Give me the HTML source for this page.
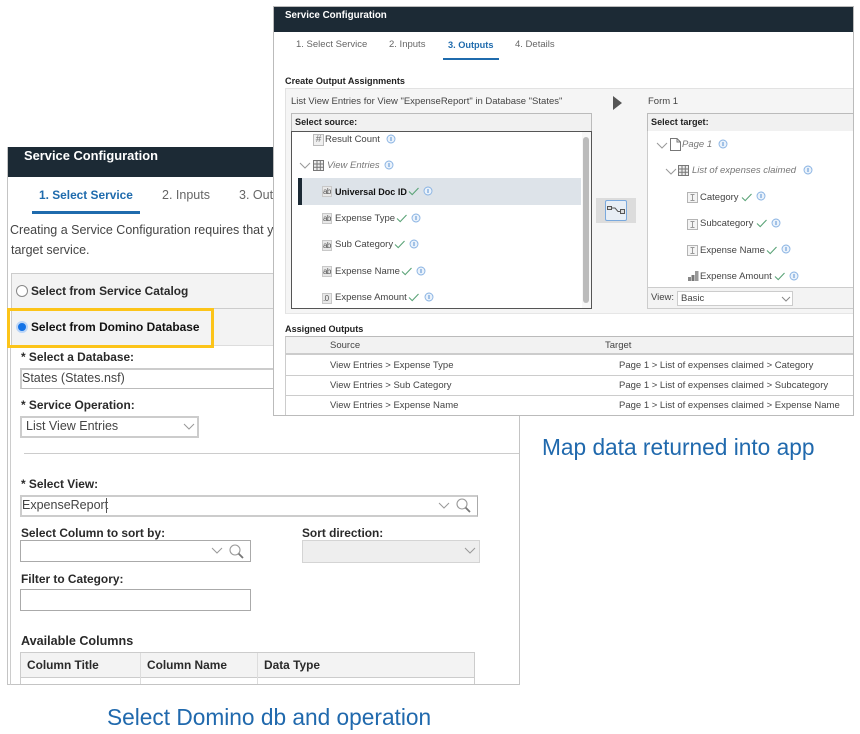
<!DOCTYPE html>
<html><head><meta charset="utf-8">
<style>
html,body{margin:0;padding:0;background:#fff;width:860px;height:734px;overflow:hidden}
body{position:relative;font-family:"Liberation Sans",sans-serif;color:#333}
.a{position:absolute;box-sizing:border-box}
.t{position:absolute;white-space:nowrap;line-height:16px;height:16px;font-size:12.5px;color:#333;margin-top:1px}
.b{font-weight:bold;color:#2a2a2a;font-size:11.9px}
.s{font-size:9.5px;color:#444}
.sb{font-size:9.1px;font-weight:bold;color:#222}
.i{font-style:italic;color:#777}
svg{position:absolute;overflow:visible}
.ab{position:absolute;width:10px;height:11px;background:#e8e8e8;border:1px solid #c8c8c8;box-sizing:border-box;font-size:8px;letter-spacing:-.6px;line-height:9px;text-align:left;color:#555;overflow:hidden}
.cap{position:absolute;white-space:nowrap;font-size:22.7px;line-height:26px;color:#2069ad;margin-top:1px}
</style></head><body>
<svg width="0" height="0" style="position:absolute"><defs>
<g id="info"><circle cx="4" cy="4" r="4" fill="#eaf2fb" stroke="#86b1e2" stroke-width=".9"/><path d="M4 2v4" stroke="#5b93d3" stroke-width="1"/></g>
<path id="chk" d="M0 4.5L3.2 7.6L9.5 1" fill="none" stroke="#5aa377" stroke-width="1.1"/>
<path id="chev" d="M0 0L5 5L10 0" fill="none" stroke="#999" stroke-width="1"/>
<g id="mag"><circle cx="6" cy="6" r="5" fill="none" stroke="#999" stroke-width="1.1"/><path d="M9.6 9.6L14 14" stroke="#777" stroke-width="1.8"/></g>
<g id="grid" fill="none" stroke="#777" stroke-width="1"><rect x=".5" y=".5" width="10" height="10" fill="#eee"/><path d="M.5 4h10M.5 7.3h10M4 .5v10M7.3 .5v10"/></g>
<g id="ti" fill="none"><rect x=".5" y=".5" width="10" height="10" fill="#f4f4f4" stroke="#b4b4b4"/><path d="M3.5 2.5h4M3.5 8.5h4M5.5 2.5v6" stroke="#999"/></g>
</defs></svg>

<!-- LEFT PANEL -->
<div class="a" style="left:7px;top:147px;width:513px;height:538px;border:1px solid #c4c4c4;background:#fff"></div>
<div class="a" style="left:8px;top:147px;width:511px;height:30px;background:#1c2a35"></div>
<div class="t" style="left:24px;top:147px;font-weight:bold;color:#fff;font-size:12.9px">Service Configuration</div>
<div class="t b" style="left:39px;top:186px;color:#1f6bad">1. Select Service</div>
<div class="a" style="left:32px;top:211px;width:108px;height:3px;background:#1f6bad"></div>
<div class="t" style="left:162px;top:186px;color:#666">2. Inputs</div>
<div class="t" style="left:239px;top:186px;color:#666">3. Outputs</div>
<div class="t" style="left:10px;top:221px;color:#444">Creating a Service Configuration requires that you select a</div>
<div class="t" style="left:11px;top:241px;color:#444">target service.</div>
<div class="a" style="left:11px;top:273px;width:508px;height:36px;background:#f3f3f3;border:1px solid #ccc;border-right:0"></div>
<div class="a" style="left:11px;top:309px;width:508px;height:37px;background:#f3f3f3;border-left:1px solid #ccc;border-bottom:1px solid #ddd"></div>
<div class="a" style="left:10px;top:346px;width:1px;height:339px;background:#ccc"></div>
<div class="a" style="left:16px;top:285px;width:12px;height:12px;border-radius:50%;background:#fff;border:1px solid #888"></div>
<div class="t b" style="left:31px;top:282px">Select from Service Catalog</div>
<div class="a" style="left:7px;top:308px;width:207px;height:40px;border:3px solid #fcc419"></div>
<div class="a" style="left:16px;top:321px;width:12px;height:12px;border-radius:50%;background:#1473e6;border:2px solid #bcd6f7"></div>
<div class="t b" style="left:31px;top:318px;color:#111">Select from Domino Database</div>

<div class="t b" style="left:21px;top:348px">* Select a Database:</div>
<div class="a" style="left:20px;top:368px;width:499px;height:21px;border:1px solid #bbb;border-top:2px solid #ccc;border-left:2px solid #ccc;background:#fff"></div>
<div class="t" style="left:22px;top:369px;color:#444">States (States.nsf)</div>
<div class="t b" style="left:21px;top:396px">* Service Operation:</div>
<div class="a" style="left:20px;top:416px;width:179px;height:22px;border:2px solid #ccc;background:#fff"></div>
<div class="t" style="left:26px;top:417px;color:#444">List View Entries</div>
<svg style="left:184px;top:424px" width="10" height="6"><use href="#chev"/></svg>
<div class="a" style="left:24px;top:453px;width:495px;height:1px;background:#ccc"></div>

<div class="t b" style="left:21px;top:475px">* Select View:</div>
<div class="a" style="left:20px;top:495px;width:458px;height:22px;border:1px solid #aaa;border-top:2px solid #ccc;border-left:2px solid #ccc;border-bottom:2px solid #ccc;background:#fff"></div>
<div class="t" style="left:22px;top:496px;color:#444">ExpenseReport</div>
<div class="a" style="left:106px;top:498px;width:1px;height:15px;background:#555"></div>
<svg style="left:439px;top:503px" width="10" height="6"><use href="#chev"/></svg>
<svg style="left:456px;top:498px" width="15" height="15"><use href="#mag"/></svg>

<div class="t b" style="left:21px;top:524px">Select Column to sort by:</div>
<div class="a" style="left:20px;top:540px;width:231px;height:22px;border:1px solid #aaa;background:#fff"></div>
<svg style="left:212px;top:548px" width="10" height="6"><use href="#chev"/></svg>
<svg style="left:229px;top:544px" width="15" height="15"><use href="#mag"/></svg>
<div class="t b" style="left:302px;top:524px">Sort direction:</div>
<div class="a" style="left:302px;top:540px;width:178px;height:23px;border:1px solid #d4d4d4;background:#eee"></div>
<svg style="left:465px;top:548px" width="10" height="6"><use href="#chev"/></svg>
<div class="t b" style="left:21px;top:570px">Filter to Category:</div>
<div class="a" style="left:20px;top:589px;width:231px;height:22px;border:1px solid #aaa;background:#fff"></div>

<div class="t b" style="left:21px;top:632px;font-size:12.6px">Available Columns</div>
<div class="a" style="left:20px;top:652px;width:455px;height:32px;border:1px solid #ccc;border-bottom:0;background:#fff"></div>
<div class="a" style="left:21px;top:653px;width:453px;height:25px;background:#f3f3f3;border-bottom:1px solid #ccc"></div>
<div class="a" style="left:140px;top:653px;width:1px;height:31px;background:#ddd"></div>
<div class="a" style="left:257px;top:653px;width:1px;height:31px;background:#ddd"></div>
<div class="t b" style="left:27px;top:656px">Column Title</div>
<div class="t b" style="left:147px;top:656px">Column Name</div>
<div class="t b" style="left:264px;top:656px">Data Type</div>

<div class="cap" style="left:107px;top:703px">Select Domino db and operation</div>
<div class="cap" style="left:542px;top:433px">Map data returned into app</div>

<!-- RIGHT PANEL -->
<div class="a" style="left:273px;top:6px;width:581px;height:410px;background:#fff;border:1px solid #bbb"></div>
<div class="a" style="left:274px;top:7px;width:579px;height:25px;background:#1c2a35"></div>
<div class="t" style="left:285px;top:7px;font-size:9.8px;font-weight:bold;color:#fff">Service Configuration</div>
<div class="t s" style="left:296px;top:36px;color:#666">1. Select Service</div>
<div class="t s" style="left:389px;top:36px;color:#666">2. Inputs</div>
<div class="t s" style="left:448px;top:36px;font-weight:bold;color:#1f6bad;font-size:9.2px">3. Outputs</div>
<div class="t s" style="left:515px;top:36px;color:#666">4. Details</div>
<div class="a" style="left:443px;top:58px;width:56px;height:2px;background:#1f6bad"></div>
<div class="t sb" style="left:285px;top:72px">Create Output Assignments</div>
<div class="a" style="left:285px;top:88px;width:568px;height:226px;background:#f5f5f5;border-top:1px solid #e2e2e2;border-left:1px solid #e2e2e2;border-bottom:1px solid #e6e6e6"></div>
<div class="t s" style="left:291px;top:93px">List View Entries for View "ExpenseReport" in Database "States"</div>
<svg style="left:613px;top:96px" width="10" height="15"><path d="M0 0L9 7L0 14Z" fill="#555"/></svg>
<div class="t s" style="left:648px;top:93px">Form 1</div>

<!-- source -->
<div class="a" style="left:291px;top:113px;width:301px;height:19px;background:#f1f1f1;border:1px solid #bbb"></div>
<div class="t sb" style="left:295px;top:113px">Select source:</div>
<div class="a" style="left:291px;top:131px;width:301px;height:178px;background:#fff;border:1px solid #555"></div>
<div class="a" style="left:582px;top:132px;width:9px;height:176px;background:#f7f7f7"></div>
<div class="a" style="left:583px;top:137px;width:6px;height:166px;background:#bbb;border-radius:3px"></div>

<div class="a" style="left:313px;top:134px;width:11px;height:12px;background:#f0f0f0;border:1px solid #bbb;font-size:10px;line-height:10px;text-align:center;color:#777">#</div>
<div class="t s" style="left:325px;top:131px">Result Count</div>
<svg style="left:387px;top:135px" width="8" height="8"><use href="#info"/></svg>

<svg style="left:300px;top:163px" width="10" height="6"><use href="#chev"/></svg>
<svg style="left:313px;top:160px" width="11" height="11"><use href="#grid"/></svg>
<div class="t s i" style="left:327px;top:157px">View Entries</div>
<svg style="left:385px;top:161px" width="8" height="8"><use href="#info"/></svg>

<div class="a" style="left:298px;top:178px;width:283px;height:27px;background:#dde3e9;border-left:4px solid #1c2a35"></div>
<div class="ab" style="left:322px;top:186px">ab</div>
<div class="t s" style="left:335px;top:183px;font-weight:bold;color:#111;font-size:9.05px">Universal Doc ID</div>
<svg style="left:409px;top:187px" width="10" height="9"><use href="#chk"/></svg>
<svg style="left:424px;top:187px" width="8" height="8"><use href="#info"/></svg>

<div class="ab" style="left:322px;top:213px">ab</div>
<div class="t s" style="left:335px;top:210px">Expense Type</div>
<svg style="left:397px;top:214px" width="10" height="9"><use href="#chk"/></svg>
<svg style="left:412px;top:214px" width="8" height="8"><use href="#info"/></svg>

<div class="ab" style="left:322px;top:240px">ab</div>
<div class="t s" style="left:335px;top:236px">Sub Category</div>
<svg style="left:395px;top:240px" width="10" height="9"><use href="#chk"/></svg>
<svg style="left:410px;top:240px" width="8" height="8"><use href="#info"/></svg>

<div class="ab" style="left:322px;top:266px">ab</div>
<div class="t s" style="left:335px;top:263px">Expense Name</div>
<svg style="left:402px;top:267px" width="10" height="9"><use href="#chk"/></svg>
<svg style="left:417px;top:267px" width="8" height="8"><use href="#info"/></svg>

<div class="ab" style="left:322px;top:293px">.0</div>
<div class="t s" style="left:335px;top:289px">Expense Amount</div>
<svg style="left:409px;top:293px" width="10" height="9"><use href="#chk"/></svg>
<svg style="left:425px;top:293px" width="8" height="8"><use href="#info"/></svg>

<!-- map button -->
<div class="a" style="left:596px;top:198px;width:40px;height:25px;background:#dcdcdc"></div>
<div class="a" style="left:605px;top:200px;width:22px;height:21px;background:#e8eef5;border:1px solid #7aa9dd;border-radius:2px"></div>
<svg style="left:607px;top:205px" width="18" height="11"><path d="M4 3h4l3 3.5h3" fill="none" stroke="#555"/><rect x=".5" y="1.5" width="4" height="3" fill="#ddd" stroke="#555"/><rect x="13.5" y="4.5" width="4" height="4" fill="#ddd" stroke="#555"/></svg>

<!-- target -->
<div class="a" style="left:647px;top:113px;width:206px;height:19px;background:#f1f1f1;border:1px solid #bbb;border-right:0"></div>
<div class="t sb" style="left:651px;top:113px">Select target:</div>
<div class="a" style="left:647px;top:131px;width:206px;height:156px;background:#fff;border-left:1px solid #ccc"></div>
<div class="a" style="left:647px;top:287px;width:206px;height:22px;background:#f3f3f3;border:1px solid #ccc;border-right:0"></div>

<svg style="left:657px;top:143px" width="10" height="6"><use href="#chev"/></svg>
<svg style="left:670px;top:138px" width="11" height="13"><path d="M.5.5h6.5l3.5 3.5v8.5h-10zM7 .5v3.5h3.5" fill="#fff" stroke="#777"/></svg>
<div class="t s i" style="left:682px;top:136px">Page 1</div>
<svg style="left:719px;top:140px" width="8" height="8"><use href="#info"/></svg>

<svg style="left:666px;top:169px" width="10" height="6"><use href="#chev"/></svg>
<svg style="left:678px;top:165px" width="11" height="11"><use href="#grid"/></svg>
<div class="t s i" style="left:692px;top:162px">List of expenses claimed</div>
<svg style="left:804px;top:166px" width="8" height="8"><use href="#info"/></svg>

<svg style="left:687px;top:192px" width="11" height="11"><use href="#ti"/></svg>
<div class="t s" style="left:700px;top:189px">Category</div>
<svg style="left:742px;top:193px" width="10" height="9"><use href="#chk"/></svg>
<svg style="left:757px;top:192px" width="8" height="8"><use href="#info"/></svg>

<svg style="left:687px;top:219px" width="11" height="11"><use href="#ti"/></svg>
<div class="t s" style="left:700px;top:215px">Subcategory</div>
<svg style="left:757px;top:219px" width="10" height="9"><use href="#chk"/></svg>
<svg style="left:772px;top:219px" width="8" height="8"><use href="#info"/></svg>

<svg style="left:687px;top:245px" width="11" height="11"><use href="#ti"/></svg>
<div class="t s" style="left:700px;top:242px">Expense Name</div>
<svg style="left:767px;top:246px" width="10" height="9"><use href="#chk"/></svg>
<svg style="left:782px;top:245px" width="8" height="8"><use href="#info"/></svg>

<svg style="left:688px;top:270px" width="11" height="12"><rect x="0" y="7" width="3" height="4" fill="#888"/><rect x="3.5" y="5" width="3" height="6" fill="#777"/><rect x="7" y="1" width="3.5" height="10" fill="#999"/></svg>
<div class="t s" style="left:700px;top:268px">Expense Amount</div>
<svg style="left:775px;top:272px" width="10" height="9"><use href="#chk"/></svg>
<svg style="left:790px;top:272px" width="8" height="8"><use href="#info"/></svg>

<div class="t s" style="left:651px;top:289px">View:</div>
<div class="a" style="left:677px;top:291px;width:116px;height:15px;background:#fff;border:1px solid #ccc"></div>
<div class="t s" style="left:681px;top:290px">Basic</div>
<svg style="left:782px;top:297px" width="8" height="5"><path d="M0 0L4 4L8 0" fill="none" stroke="#888"/></svg>

<!-- assigned -->
<div class="t sb" style="left:285px;top:320px">Assigned Outputs</div>
<div class="a" style="left:285px;top:336px;width:568px;height:19px;background:#f2f2f2;border-top:1px solid #bbb;border-left:1px solid #ccc;border-bottom:2px solid #ccc"></div>
<div class="t s" style="left:330px;top:337px">Source</div>
<div class="t s" style="left:605px;top:337px">Target</div>
<div class="a" style="left:285px;top:375px;width:568px;height:1px;background:#ccc"></div>
<div class="a" style="left:285px;top:395px;width:568px;height:1px;background:#ccc"></div>
<div class="a" style="left:285px;top:355px;width:1px;height:60px;background:#ccc"></div>
<div class="t s" style="left:330px;top:357px">View Entries &gt; Expense Type</div>
<div class="t s" style="left:619px;top:357px">Page 1 &gt; List of expenses claimed &gt; Category</div>
<div class="t s" style="left:330px;top:377px">View Entries &gt; Sub Category</div>
<div class="t s" style="left:619px;top:377px">Page 1 &gt; List of expenses claimed &gt; Subcategory</div>
<div class="t s" style="left:330px;top:397px">View Entries &gt; Expense Name</div>
<div class="t s" style="left:619px;top:397px">Page 1 &gt; List of expenses claimed &gt; Expense Name</div>
</body></html>
